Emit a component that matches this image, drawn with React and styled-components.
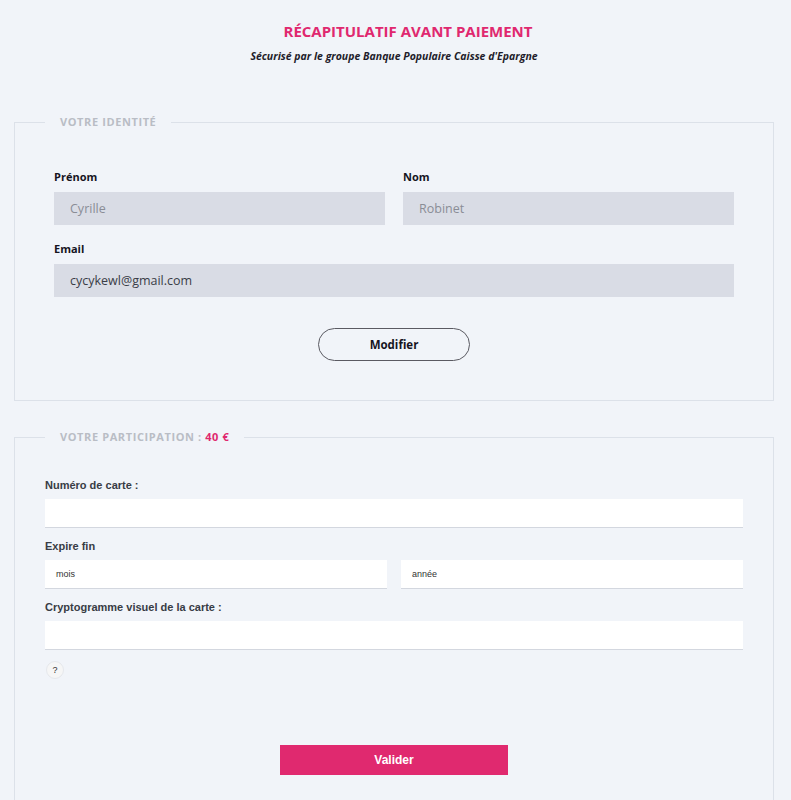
import React from 'react';
import styled, { createGlobalStyle } from 'styled-components';

const GlobalStyle = createGlobalStyle`
    html, body {
        margin: 0;
        padding: 0;
        background-color: #f1f4f9;
    }
    body {
        font-family: "Open Sans", "Liberation Sans", sans-serif;
    }
`;

const Page = styled.div`
    padding: 21px 17px 0 14px;
    display: flex;
    flex-direction: column;
`;

const Header = styled.header`
    text-align: center;
    h1 {
        margin: 0 0 7px 0;
        padding-left: 28px;
        font-size: 15px;
        line-height: 20px;
        font-weight: 700;
        color: #e0286f;
    }
    p {
        margin: 0;
        font-size: 10.5px;
        line-height: 16px;
        font-weight: 700;
        font-style: italic;
        color: #1f1d2b;
    }
`;

const Section = styled.fieldset`
    margin: ${p => p.$top}px 0 0 0;
    padding: ${p => p.$padTop}px ${p => p.$padX}px ${p => p.$padBottom}px;
    border: 1px solid #dce1e9;
    min-width: 0;
    legend {
        margin-left: ${p => 30 - p.$padX}px;
    }
`;

const Legend = styled.legend`
    padding: 0 15px;
    font-size: 11px;
    line-height: 16px;
    font-weight: 700;
    letter-spacing: 0.6px;
    color: #b9bdc5;
    span {
        color: #e0286f;
    }
`;

const Row = styled.div`
    display: flex;
    gap: ${p => p.$gap}px;
`;

const Field = styled.div`
    flex: 1;
    display: flex;
    flex-direction: column;
`;

const Label = styled.label`
    display: block;
    font-size: 11px;
    line-height: 15px;
    font-weight: 700;
    color: #16141f;
    margin: ${p => p.$top || 0}px 0 8px;
`;

const ReadOnlyInput = styled.div`
    height: 33px;
    background-color: #d9dce5;
    color: ${p => (p.$dark ? '#3a3d47' : '#8a8d96')};
    font-size: 12.5px;
    line-height: 33px;
    padding-left: 16px;
`;

const PillButton = styled.button`
    display: block;
    margin: 31px auto 0;
    width: 152px;
    height: 33px;
    border: 1px solid #5a5a62;
    border-radius: 17px;
    background: transparent;
    font-family: "Open Sans", sans-serif;
    font-size: 11.5px;
    font-weight: 700;
    color: #16141f;
`;

const CardLabel = styled.label`
    display: block;
    font-family: "Liberation Sans", Arial, sans-serif;
    font-size: 11px;
    line-height: 14px;
    font-weight: 700;
    color: #383c45;
    margin: ${p => p.$top || 0}px 0 7px;
`;

const CardInput = styled.div`
    height: 28px;
    background-color: #ffffff;
    border-bottom: 1px solid #d3d7df;
    font-family: "Liberation Sans", Arial, sans-serif;
    font-size: 9px;
    line-height: 28px;
    color: #333;
    padding-left: 11px;
`;

const Help = styled.div`
    margin: 11px 0 0 1px;
    width: 16px;
    height: 16px;
    border-radius: 50%;
    background: #f6f6f6;
    border: 1px solid #e6e8ec;
    font-family: "Liberation Sans", Arial, sans-serif;
    font-size: 9px;
    line-height: 16px;
    text-align: center;
    color: #333;
`;

const SubmitButton = styled.button`
    display: block;
    margin: 66px auto 0;
    width: 228px;
    height: 30px;
    border: none;
    background-color: #e0296f;
    color: #fff;
    font-family: "Liberation Sans", Arial, sans-serif;
    font-size: 12px;
    font-weight: 700;
`;

const App = () => {
    return (
        <React.Fragment>
            <GlobalStyle />
            <Page>
                <Header>
                    <h1>RÉCAPITULATIF AVANT PAIEMENT</h1>
                    <p>Sécurisé par le groupe Banque Populaire Caisse d'Epargne</p>
                </Header>

                <Section $top={50} $padTop={39} $padX={39} $padBottom={39}>
                    <Legend>VOTRE IDENTITÉ</Legend>
                    <Row $gap={18}>
                        <Field>
                            <Label>Prénom</Label>
                            <ReadOnlyInput>Cyrille</ReadOnlyInput>
                        </Field>
                        <Field>
                            <Label>Nom</Label>
                            <ReadOnlyInput>Robinet</ReadOnlyInput>
                        </Field>
                    </Row>
                    <Label $top={16}>Email</Label>
                    <ReadOnlyInput $dark>cycykewl@gmail.com</ReadOnlyInput>
                    <PillButton>Modifier</PillButton>
                </Section>

                <Section $top={28} $padTop={33} $padX={30} $padBottom={30}>
                    <Legend>VOTRE PARTICIPATION : <span>40 €</span></Legend>
                    <CardLabel>Numéro de carte :</CardLabel>
                    <CardInput />
                    <CardLabel $top={11}>Expire fin</CardLabel>
                    <Row $gap={14}>
                        <Field>
                            <CardInput>mois</CardInput>
                        </Field>
                        <Field>
                            <CardInput>année</CardInput>
                        </Field>
                    </Row>
                    <CardLabel $top={11}>Cryptogramme visuel de la carte :</CardLabel>
                    <CardInput />
                    <Help>?</Help>
                    <SubmitButton>Valider</SubmitButton>
                </Section>
            </Page>
        </React.Fragment>
    );
};

export default App;
